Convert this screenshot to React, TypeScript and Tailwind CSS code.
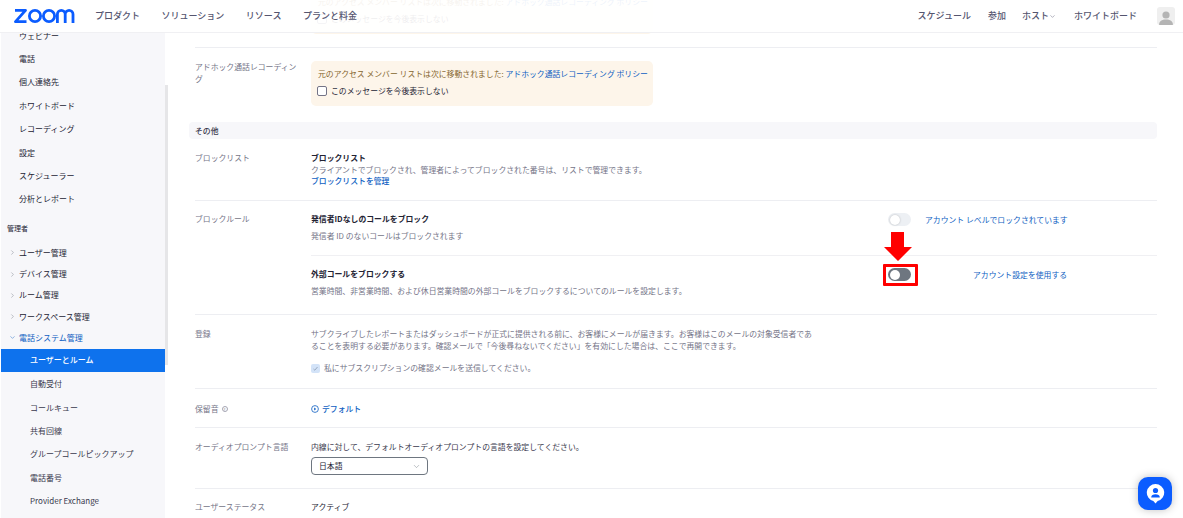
import { ChevronDown, ChevronRight } from "lucide-react";

const topNav = ["プロダクト", "ソリューション", "リソース", "プランと料金"];
const personalItems = ["ウェビナー", "電話", "個人連絡先", "ホワイトボード", "レコーディング", "設定", "スケジューラー", "分析とレポート"];
const adminItems = ["ユーザー管理", "デバイス管理", "ルーム管理", "ワークスペース管理"];
const phoneItems = ["自動受付", "コールキュー", "共有回線", "グループコールピックアップ", "電話番号", "Provider Exchange"];

function ZoomLogo() {
  return (
    <svg width="61" height="14" viewBox="0 0 61 14" fill="none" stroke="#0b5cff" strokeWidth="2.8">
      <path d="M1 1.4h10.5L1.5 12.6h11" strokeLinejoin="round" />
      <circle cx="21" cy="7" r="5.6" />
      <circle cx="35" cy="7" r="5.6" />
      <path d="M43.4 14V5.3a3.9 3.9 0 0 1 7.8 0V14M51.2 5.3a3.9 3.9 0 0 1 7.8 0V14" />
    </svg>
  );
}

function Header() {
  return (
    <header className="absolute top-0 left-0 right-0 z-10 flex h-[33px] items-center border-b border-[#f0f0f3] bg-white/[0.92] pl-[14px] pr-[8px] text-[9px] font-medium text-[#55556f]">
      <ZoomLogo />
      <nav className="ml-5 flex gap-[21.5px]">
        {topNav.map((item) => (
          <span key={item}>{item}</span>
        ))}
      </nav>
      <div className="ml-auto flex items-center">
        <span>スケジュール</span>
        <span className="ml-[17px]">参加</span>
        <span className="ml-[16px] flex items-center">
          ホスト
          <ChevronDown size={7} strokeWidth={1.5} />
        </span>
        <span className="ml-[18px]">ホワイトボード</span>
        <div className="ml-[20px] flex h-[18px] w-[18px] items-end justify-center overflow-hidden rounded-[3px] bg-[#efefef]">
          <svg width="16" height="15" viewBox="0 0 16 15" fill="#b4b4b4">
            <circle cx="8" cy="5" r="3.6" />
            <path d="M1 15c0-4 3-5.6 7-5.6s7 1.6 7 5.6z" />
          </svg>
        </div>
      </div>
    </header>
  );
}

function Sidebar() {
  return (
    <aside className="relative ml-px h-full w-[164px] shrink-0 overflow-hidden bg-[#f7f7fa] pt-[24px] text-[8px] text-[#232333]">
      {personalItems.map((item) => (
        <div key={item} className="flex h-[23.4px] items-center pl-[18px]">
          {item}
        </div>
      ))}
      <div className="mt-[6px] flex h-[23px] items-center pl-[6px] text-[7px]">管理者</div>
      <div className="mt-[2px]">
        {adminItems.map((item) => (
          <div key={item} className="flex h-[21.3px] items-center pl-[8px]">
            <ChevronRight size={7} strokeWidth={1.5} className="mr-[3px] text-[#6e7680]" />
            {item}
          </div>
        ))}
        <div className="flex h-[21.3px] items-center pl-[8px] text-[#0e5ec2]">
          <ChevronDown size={7} strokeWidth={1.5} className="mr-[3px]" />
          電話システム管理
        </div>
      </div>
      <div className="flex h-[23px] items-center bg-[#0e72ed] pl-[29px] font-medium text-white">ユーザーとルーム</div>
      <div className="pt-px">
        {phoneItems.map((item) => (
          <div key={item} className="flex h-[23.4px] items-center pl-[29px] text-[#39394d]">
            {item}
          </div>
        ))}
      </div>
    </aside>
  );
}

function Toggle({ on }: { on: boolean }) {
  return (
    <div className={`flex h-[13px] w-[23px] items-center rounded-full pl-[1.5px] ${on ? "bg-[#6e7680]" : "bg-[#edf0f4]"}`}>
      <div className={`h-[10px] w-[10px] rounded-full bg-white ${on ? "" : "shadow-[0_0_2px_rgba(0,0,0,0.25)]"}`} />
    </div>
  );
}

function Notice() {
  return (
    <div className="flex h-[45px] w-[342px] flex-col justify-center gap-[5px] rounded-[5px] bg-[#fdf5ea] pb-[2px] pl-[6px] whitespace-nowrap">
      <div className="ml-[1px] text-[#85662e]">
        元のアクセス メンバー リストは次に移動されました: <span className="text-[#0e5ec2]">アドホック通話レコーディング ポリシー</span>
      </div>
      <label className="flex items-center gap-[4px] text-[#232333]">
        <span className="h-[10px] w-[10px] rounded-[2px] border border-[#747487] bg-white" />
        このメッセージを今後表示しない
      </label>
    </div>
  );
}

function Row({ label, className, children }: { label: React.ReactNode; className: string; children: React.ReactNode }) {
  return (
    <div className={`ml-[6px] flex border-b border-[#edeef2] ${className}`}>
      <div className="w-[116px] shrink-0 pr-[12px] text-[#747487]">{label}</div>
      <div className="min-w-0 flex-1">{children}</div>
    </div>
  );
}

function Content() {
  return (
    <main className="relative h-full flex-1 overflow-hidden pl-[24px] pr-[26px] text-[7.85px] leading-[12px]">
      <div className="ml-[122px] -mt-[11px] h-[58px]">
        <Notice />
      </div>
      <div className="ml-[6px] flex h-[75px] border-t border-[#edeef2] pt-[13px] text-[#747487]">
        <div className="w-[116px] shrink-0 pr-[12px]">アドホック通話レコーディング</div>
        <Notice />
      </div>
      <div className="flex h-[17px] items-center rounded-[4px] bg-[#f7f7fa] pl-[6px] font-medium text-[#39394d]">その他</div>

      <Row label="ブロックリスト" className="h-[62px] pt-[13px]">
        <div className="font-bold leading-[11.5px] text-[#232333]">ブロックリスト</div>
        <div className="leading-[11.5px] text-[#747487]">クライアントでブロックされ、管理者によってブロックされた番号は、リストで管理できます。</div>
        <div className="font-medium leading-[11.5px] text-[#0e5ec2]">ブロックリストを管理</div>
      </Row>

      <Row label="ブロックルール" className="h-[114px] pt-[12px]">
        <div className="h-[43px] border-b border-[#f0f0f3]">
          <div className="flex justify-between">
            <div className="font-bold text-[#232333]">発信者IDなしのコールをブロック</div>
            <div className="flex items-center">
              <Toggle on={false} />
              <span className="ml-[14px] w-[142px] whitespace-nowrap text-[#0e5ec2]">アカウント レベルでロックされています</span>
              <div className="w-[90px]" />
            </div>
          </div>
          <div className="mt-[4px] text-[#747487]">発信者 ID のないコールはブロックされます</div>
        </div>
        <div className="mt-[12px] flex justify-between">
          <div className="font-bold text-[#232333]">外部コールをブロックする</div>
          <div className="flex items-center">
            <Toggle on />
            <span className="ml-[62px] w-[94px] whitespace-nowrap text-right text-[#0e5ec2]">アカウント設定を使用する</span>
            <div className="w-[90px]" />
          </div>
        </div>
        <div className="mt-[4px] text-[#747487]">営業時間、非営業時間、および休日営業時間の外部コールをブロックするについてのルールを設定します。</div>
      </Row>

      <Row label="登録" className="h-[74px] pt-[13px]">
        <div className="leading-[11.5px] text-[#747487]">
          サブクライブしたレポートまたはダッシュボードが正式に提供される前に、お客様にメールが届きます。お客様はこのメールの対象受信者であ
          <br />
          ることを表明する必要があります。確認メールで「今後尋ねないでください」を有効にした場合は、ここで再開できます。
        </div>
        <label className="mt-[11px] flex items-center gap-[4px] text-[#747487]">
          <span className="flex h-[9px] w-[9px] items-center justify-center rounded-[2px] bg-[#d3e3f8]">
            <svg width="7" height="7" viewBox="0 0 7 7" fill="none" stroke="#8a9bb0" strokeWidth="0.8">
              <path d="M1.5 4l1.3 1.2L5.5 2" />
            </svg>
          </span>
          私にサブスクリプションの確認メールを送信してください。
        </label>
      </Row>

      <Row
        label={
          <span className="flex items-center gap-[3px]">
            保留音
            <span className="flex h-[6px] w-[6px] items-center justify-center rounded-full border-[0.5px] border-[#a5a5b3] text-[4px] leading-none">?</span>
          </span>
        }
        className="h-[39px] pt-[14px]"
      >
        <div className="flex items-center gap-[3px] font-medium text-[#0e5ec2]">
          <svg width="8" height="8" viewBox="0 0 8 8" fill="none" stroke="#0e5ec2" strokeWidth="0.8">
            <circle cx="4" cy="4" r="3.4" />
            <path d="M3.2 2.6 5.2 4 3.2 5.4z" fill="#0e5ec2" stroke="none" />
          </svg>
          デフォルト
        </div>
      </Row>

      <Row label="オーディオプロンプト言語" className="h-[61px] pt-[13px]">
        <div className="text-[#39394d]">内線に対して、デフォルトオーディオプロンプトの言語を設定してください。</div>
        <div className="mt-[4px] flex h-[18px] w-[117px] items-center justify-between rounded-[4px] border border-[#6e7680] pl-[7px] pr-[6px] text-[#232333]">
          日本語
          <ChevronDown size={9} strokeWidth={1.2} className="text-[#6e7680]" />
        </div>
      </Row>

      <div className="ml-[6px] flex pt-[12px]">
        <div className="w-[116px] shrink-0 text-[#747487]">ユーザーステータス</div>
        <div className="text-[#232333]">アクティブ</div>
      </div>

      <div className="absolute left-[718px] top-[264px] h-[22px] w-[35px] rounded-[1px] border-[3px] border-[#ff0000]" />
      <svg className="absolute left-[719px] top-[232px]" width="28" height="29" viewBox="0 0 28 29" fill="#ff0000">
        <path d="M7 0h13v15h8L14 29 0 15h7z" />
      </svg>
    </main>
  );
}

function ChatButton() {
  return (
    <div className="absolute left-[1138px] top-[477px] z-10 flex h-[33px] w-[34px] items-center justify-center rounded-[10px] bg-[#0b5cff] shadow-[0_0_8px_rgba(0,0,0,0.25)]">
      <svg width="19" height="21" viewBox="0 0 22 24">
        <path d="M11 1a10 10 0 0 1 2.5 19.7L11 23.5l-2.5-2.8A10 10 0 0 1 11 1z" fill="#fff" />
        <circle cx="11" cy="8.5" r="3" fill="#0b5cff" />
        <path d="M6 16.5c0-2.6 2.3-3.6 5-3.6s5 1 5 3.6z" fill="#0b5cff" />
      </svg>
    </div>
  );
}

export default function App() {
  return (
    <div className="relative flex h-[518px] w-[1183px] overflow-hidden bg-white [font-family:'Noto_Sans_CJK_JP',sans-serif]">
      <Header />
      <Sidebar />
      <div className="absolute left-[165px] top-[85px] h-[280px] w-[3px] bg-[#e6e6e8]" />
      <Content />
      <ChatButton />
    </div>
  );
}
